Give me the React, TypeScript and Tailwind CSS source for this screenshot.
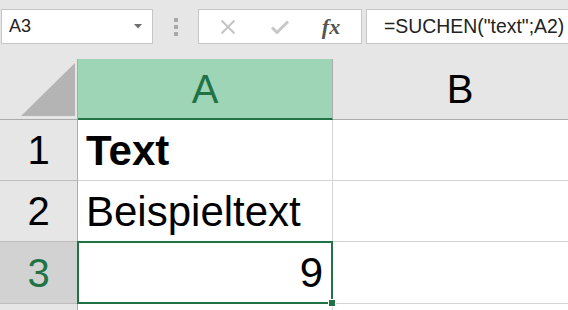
import React from "react";

const font = { fontFamily: '"Liberation Sans", Arial, sans-serif' };

const RowHead = ({ n, active }: { n?: string; active?: boolean }) => (
  <div
    className={`w-[78px] shrink-0 h-full flex items-center justify-center border-r border-r-[#ababab] border-b border-b-[#bdbdbd] text-[40px] ${
      active ? "bg-[#d2d2d2] text-[#217346]" : "bg-[#e6e6e6] text-black"
    }`}
  >
    {n}
  </div>
);

const Cell = ({ children, className = "" }: { children?: React.ReactNode; className?: string }) => (
  <div className={`w-[255px] shrink-0 h-full border-r border-b border-[#d4d4d4] flex items-center px-2 text-[42px] text-black ${className}`}>
    {children}
  </div>
);

export default function App() {
  return (
    <div className="w-[568px] h-[310px] overflow-hidden bg-white" style={font}>
      {/* formula bar */}
      <div className="h-[59px] bg-[#e6e6e6] flex items-start pt-[9px] pl-[1px]">
        <div className="w-[152px] h-[35px] bg-white border border-[#c6c6c6] flex items-center pl-[7px] pr-[10px] text-[18px] text-[#222]">
          <span className="flex-1">A3</span>
          <svg width="8" height="5" viewBox="0 0 8 5">
            <path d="M0 0h8L4 4.5z" fill="#6f6f6f" />
          </svg>
        </div>
        <div className="w-[45px] h-[35px] flex flex-col items-center justify-center gap-[3px]">
          <div className="w-[4px] h-[4px] bg-[#a8a8a8]" />
          <div className="w-[4px] h-[4px] bg-[#a8a8a8]" />
          <div className="w-[4px] h-[4px] bg-[#a8a8a8]" />
        </div>
        <div className="w-[164px] h-[35px] bg-white border border-[#c6c6c6] flex items-center">
          <div className="w-[56px] flex justify-center pl-[2px]">
            <svg width="16" height="16" viewBox="0 0 16 16">
              <path d="M1.5 1.5l13 13M14.5 1.5l-13 13" stroke="#c4c4c4" strokeWidth="2" />
            </svg>
          </div>
          <div className="w-[50px] flex justify-center">
            <svg width="18" height="14" viewBox="0 0 18 14">
              <path d="M1 7.5l5 5L17 1.5" stroke="#c8c8c8" strokeWidth="3" fill="none" />
            </svg>
          </div>
          <div
            className="flex-1 flex justify-center text-[22px] italic font-bold text-[#555] pr-[4px]"
            style={{ fontFamily: '"Liberation Serif", "DejaVu Serif", serif' }}
          >
            fx
          </div>
        </div>
        <div className="ml-[4px] flex-1 h-[35px] bg-white border border-[#c6c6c6] border-r-0 flex items-center pl-[17px] text-[19.4px] text-[#222] whitespace-nowrap">
          =SUCHEN("text";A2)
        </div>
      </div>

      {/* header row */}
      <div className="h-[61px] flex bg-[#e6e6e6]">
        <div className="w-[78px] shrink-0 h-full border-r border-r-[#ababab] border-b border-b-[#ababab] flex items-end justify-end pr-[2px] pb-[3px]">
          <svg width="54" height="53" viewBox="0 0 54 53">
            <path d="M0 53L54 0V53z" fill="#b4b4b4" />
          </svg>
        </div>
        <div className="w-[255px] shrink-0 h-full bg-[#9fd5b7] border-r border-r-[#ababab] border-b-2 border-b-[#217346] flex items-center justify-center text-[40px] text-[#217346]">
          A
        </div>
        <div className="w-[255px] shrink-0 h-full border-r border-r-[#ababab] border-b border-b-[#ababab] flex items-center justify-center text-[40px] text-black">
          B
        </div>
      </div>

      {/* rows */}
      <div className="h-[61px] flex">
        <RowHead n="1" />
        <Cell className="font-bold">Text</Cell>
        <Cell />
      </div>
      <div className="h-[61px] flex">
        <RowHead n="2" />
        <Cell>Beispieltext</Cell>
        <Cell />
      </div>
      <div className="h-[62px] flex">
        <RowHead n="3" active />
        <Cell className="justify-end relative">
          <span className="pr-[1px]">9</span>
          <div className="absolute left-[-1px] top-[-1px] right-[-1px] bottom-[-1px] border-2 border-[#217346]" />
          <div className="absolute right-[-4px] bottom-[-4px] w-[6px] h-[6px] bg-[#217346] border border-white box-content" />
        </Cell>
        <Cell />
      </div>
      <div className="h-[61px] flex">
        <RowHead />
        <Cell />
        <Cell />
      </div>
    </div>
  );
}
